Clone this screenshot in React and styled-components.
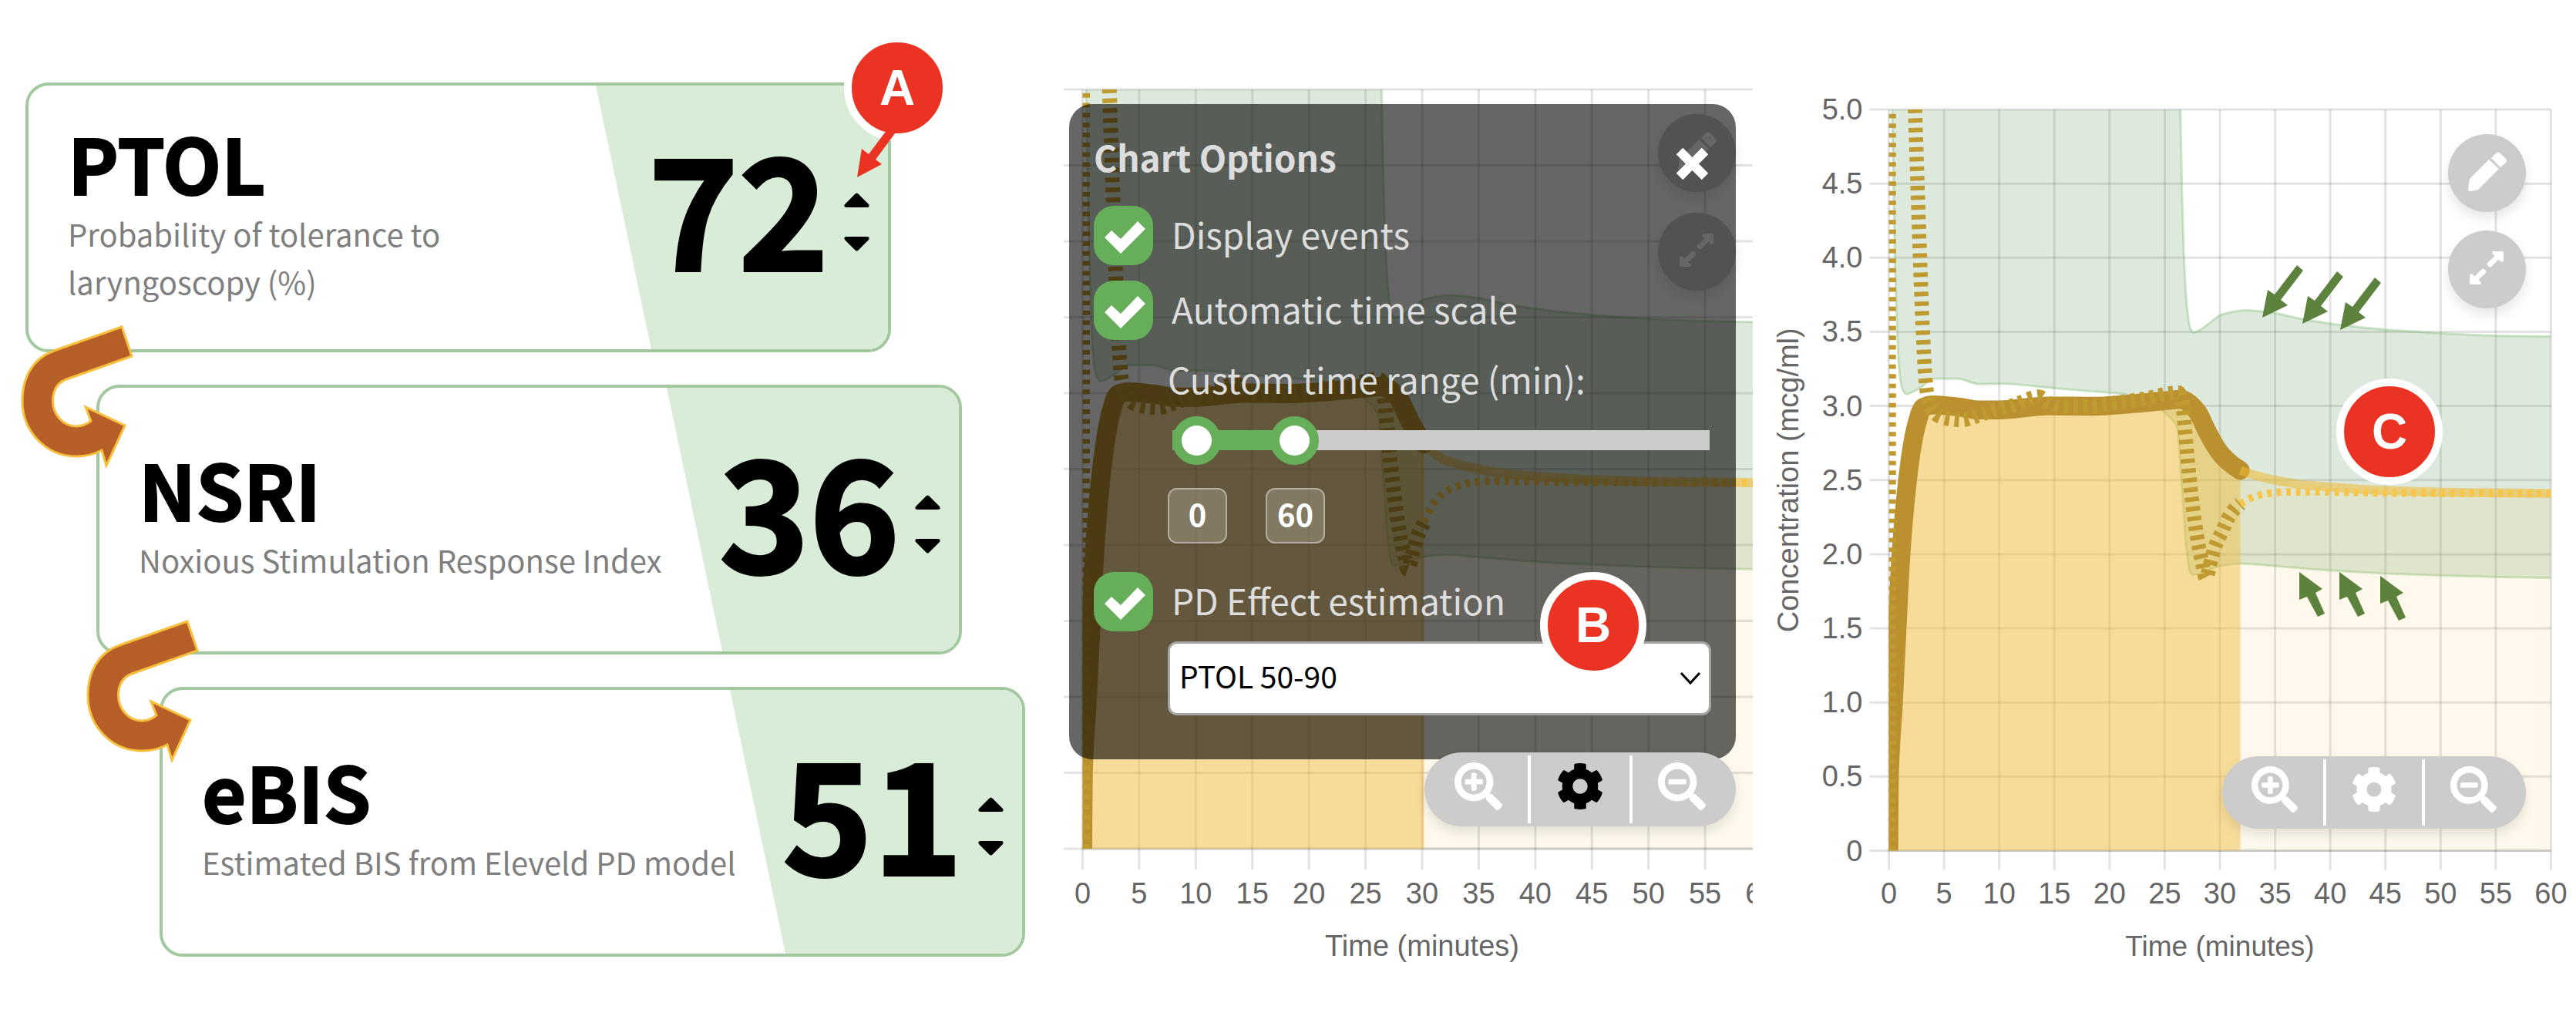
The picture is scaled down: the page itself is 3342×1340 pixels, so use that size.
import React, { useState } from 'react';
import styled, { createGlobalStyle, css } from 'styled-components';
import { FaCog, FaSearchMinus, FaSearchPlus } from 'react-icons/fa';

const sans = `"Noto Sans CJK SC", "Noto Sans", sans-serif`;
const arial = `"Liberation Sans", Arial, sans-serif`;

const GlobalStyle = createGlobalStyle`
  *, *::before, *::after { box-sizing: border-box; }
  body { margin: 0; background: #fff; font-family: ${sans}; }
  button, input, select { font: inherit; margin: 0; }
`;

const Page = styled.main`
  display: grid;
  grid-template-columns: minmax(0, 1380fr) minmax(0, 894fr) minmax(0, 1068fr);
  align-items: start;
  padding-top: 107px;
`;

/* ---------- score cards ---------- */

const Stack = styled.section`
  position: relative;
  display: flex;
  flex-direction: column;
  gap: 42px;
  padding-left: 33px;
`;

const Card = styled.article`
  position: relative;
  display: flex;
  align-items: stretch;
  width: 1123px;
  max-width: 100%;
  min-height: 350px;
  margin-left: ${(p) => p.$indent}px;
  border: 4px solid #a3c8a0;
  border-radius: 30px;
  overflow: hidden;
  background: #fff;

  &::before {
    content: '';
    position: absolute;
    inset: 0 0 0 auto;
    width: 379px;
    background: #d9ecd8;
    clip-path: polygon(0 0, 100% 0, 100% 100%, 72px 100%);
  }
`;

const CardText = styled.div`
  position: relative;
  display: flex;
  flex: 1;
  flex-direction: column;
  justify-content: center;
  min-width: 0;
  padding: 0 0 20px 51px;
`;

const CardTitle = styled.h2`
  margin: 0;
  font-size: 99px;
  line-height: 123px;
  font-weight: 700;
  color: #000;
  -webkit-text-stroke: 2px #000;
`;

const CardNote = styled.p`
  max-width: 715px;
  margin: 0;
  font-size: 40px;
  line-height: 62px;
  color: #7f7f7f;
`;

const CardValue = styled.div`
  position: relative;
  display: flex;
  align-items: center;
  gap: 20px;
  padding-right: 24px;
`;

const Score = styled.output`
  padding-bottom: 34px;
  font-size: 198px;
  line-height: 240px;
  font-weight: 700;
  color: #000;
  -webkit-text-stroke: 4px #000;
`;

const Stepper = styled.div`
  display: flex;
  flex-direction: column;
  gap: 38px;
  padding-top: 12px;
`;

const StepButton = styled.button`
  display: block;
  width: 33px;
  height: 19px;
  padding: 0;
  border: 0;
  background: none;
  color: #000;

  svg { display: block; transform: ${(p) => (p.$down ? 'scaleY(-1)' : 'none')}; }
`;

const Swoop = styled.svg`
  position: absolute;
  left: ${(p) => p.$left}px;
  top: ${(p) => p.$top}px;
  width: 150px;
  height: 190px;
`;

/* ---------- call-out badges ---------- */

const Badge = styled.span`
  position: absolute;
  left: ${(p) => p.$left}px;
  top: ${(p) => p.$top}px;
  display: flex;
  align-items: center;
  justify-content: center;
  width: 138px;
  height: 138px;
  border: 10px solid #fff;
  border-radius: 50%;
  background: #ea3323;
  color: #fff;
  font: 700 64px/64px ${arial};
`;

const Pointer = styled.svg`
  position: absolute;
  left: 1106px;
  top: 50px;
  width: 60px;
  height: 80px;
`;

/* ---------- charts ---------- */

const ChartFrame = styled.section`
  position: relative;
  min-width: 0;
`;

const Plot = styled.svg`
  display: block;
  width: 100%;
  height: auto;
  font-family: ${arial};
  font-size: 38px;
  fill: #666;
`;

const AxisTitle = styled.text`
  font-size: ${(p) => (p.$small ? 37 : 38)}px;
`;

const RoundButton = styled.button`
  position: absolute;
  right: ${(p) => p.$right}px;
  top: ${(p) => p.$top}px;
  width: 101px;
  height: 101px;
  padding: 0;
  border: 0;
  border-radius: 50%;
  background: #ccc;
  color: #fff;
  box-shadow: 0 8px 16px rgba(0, 0, 0, 0.1);

  svg { display: block; width: 100%; height: 100%; }
`;

const Toolbar = styled.div`
  position: absolute;
  right: ${(p) => p.$right}px;
  top: ${(p) => p.$top}px;
  display: flex;
  width: ${(p) => (p.$small ? 394 : 404)}px;
  height: ${(p) => (p.$small ? 94 : 96)}px;
  padding: 4px 6px;
  border-radius: 48px;
  background: #ccc;
  box-shadow: 0 8px 16px rgba(0, 0, 0, 0.1);
`;

const ToolButton = styled.button`
  display: flex;
  flex: 1;
  align-items: center;
  justify-content: center;
  padding: 0 0 8px;
  border: 0;
  background: none;
  color: ${(p) => (p.$active ? '#000' : '#fff')};
  font-size: ${(p) => (p.$small ? 60 : 62)}px;

  & + & { border-left: 4px solid #fff; }
`;

/* ---------- options dialog ---------- */

const Dialog = styled.form`
  position: absolute;
  left: 7px;
  right: 22px;
  top: 28px;
  display: flex;
  flex-direction: column;
  height: 850px;
  padding: 32px;
  border-radius: 30px;
  background: rgba(0, 0, 0, 0.6);
  color: #ddd;
  font-size: 46px;
`;

const DialogTitle = styled.h3`
  margin: 0 0 28px;
  font-size: 46px;
  line-height: 72px;
  font-weight: 700;
`;

const CloseButton = styled.button`
  position: absolute;
  right: 36px;
  top: 57px;
  width: 41px;
  height: 41px;
  padding: 0;
  border: 0;
  background: none;
  color: #fff;

  svg { display: block; }
`;

const CheckRow = styled.label`
  position: relative;
  display: flex;
  align-items: flex-start;
  gap: 24px;
  height: 77px;
  margin-bottom: ${(p) => p.$after}px;
  line-height: 72px;

  input {
    flex: none;
    width: 77px;
    height: 77px;
    appearance: none;
    border-radius: 26px;
    background: #67ae5b;
  }

  svg {
    position: absolute;
    left: 0;
    top: 0;
    width: 77px;
    height: 77px;
    visibility: hidden;
    pointer-events: none;
  }

  input:checked + svg { visibility: visible; }
`;

const Indent = styled.div`
  display: flex;
  flex-direction: column;
  padding-left: 96px;
`;

const RangeTitle = styled.span`
  line-height: 64px;
`;

const Slider = styled.div`
  position: relative;
  height: 64px;
  margin: 16px 2px 30px 6px;
`;

const Track = styled.div`
  position: absolute;
  inset: 19px 0;
  background: #ccc;
`;

const TrackFill = styled.div`
  height: 100%;
  background: #67ae5b;
`;

const thumb = css`
  width: 63px;
  height: 63px;
  border: 12px solid #67ae5b;
  border-radius: 50%;
  background: #fff;
  pointer-events: auto;
  appearance: none;
`;

const Range = styled.input`
  position: absolute;
  inset: 0;
  width: 100%;
  height: 64px;
  appearance: none;
  background: none;
  pointer-events: none;

  &::-webkit-slider-thumb { ${thumb} }
  &::-moz-range-thumb { ${thumb} }
`;

const RangeValues = styled.div`
  display: flex;
  gap: 50px;
  margin-bottom: 37px;
`;

const RangeValue = styled.output`
  width: 77px;
  height: 72px;
  border: 2px solid rgba(255, 255, 255, 0.4);
  border-radius: 12px;
  background: rgba(255, 255, 255, 0.2);
  color: #fff;
  font-size: 40px;
  line-height: 62px;
  font-weight: 700;
  text-align: center;
`;

const SelectBox = styled.div`
  position: relative;

  select {
    width: 100%;
    height: 96px;
    padding: 0 48px 8px 12px;
    border: 3px solid #a5a5a5;
    border-radius: 12px;
    appearance: none;
    background: #fff;
    color: #000;
    font-size: 39px;
  }

  svg {
    position: absolute;
    right: 13px;
    top: 38px;
    pointer-events: none;
  }
`;

/* ---------- chart data: [minutes, mcg/ml] ---------- */

const BAND_LOW = [[0, 6], [0.3, 5], [0.55, 3.98], [0.72, 3.57], [0.92, 3.26], [1.2, 3.12], [1.55, 3.08], [2.8, 3.12], [4.04, 3.184], [6.2, 3.184], [8.2, 3.147], [10.3, 3.15], [13, 3.135], [15, 3.12], [18, 3.1], [21.3, 3.08], [23.5, 3.03], [25, 2.956], [26.15, 2.85], [26.45, 2.545], [26.7, 2.31], [26.93, 2.06], [27.3, 1.88], [27.5, 1.86], [28, 1.868], [30.2, 1.924], [32.1, 1.936], [34.95, 1.92], [40, 1.89], [45, 1.87], [50, 1.856], [55, 1.846], [60, 1.84]];
const BAND_HIGH = [[26.35, 5.3], [26.42, 5], [26.55, 4.5], [26.75, 4], [27, 3.68], [27.3, 3.53], [27.6, 3.495], [28, 3.505], [29, 3.556], [30.2, 3.618], [32.4, 3.645], [35, 3.626], [37.4, 3.587], [40, 3.556], [45, 3.515], [50, 3.49], [55, 3.474], [60, 3.468]];
const EFFECT = [[0, 0], [0.05, 0.5], [0.42, 1], [0.75, 1.5], [1.1, 2], [1.55, 2.4], [2.05, 2.7], [2.5, 2.87], [3.1, 2.99], [4, 3.007], [6.3, 2.993], [8.2, 2.973], [10, 2.973], [14.3, 3], [18.5, 2.998], [21.8, 3.013], [25, 3.035], [26.5, 3.045], [27.1, 3.025], [28, 2.956], [28.75, 2.843], [29.5, 2.74], [30.18, 2.668], [31, 2.61], [31.85, 2.565], [32.85, 2.54], [35, 2.5], [37.4, 2.47], [40, 2.453], [45, 2.43], [50, 2.418], [60, 2.41]];
const PLASMA = [[2.3, 5.2], [2.37, 5], [3.47, 3.08], [3.9, 2.98], [4.7, 2.925], [5.7, 2.91], [6.7, 2.905], [7.5, 2.92], [9.3, 2.966], [11.5, 3.01], [13, 3.055], [13.6, 3.063], [14.5, 3.018], [15.5, 2.997], [18, 2.998], [21, 3.026], [23, 3.047], [26.25, 3.09], [26.6, 3.02], [26.8, 2.87], [27.2, 2.545], [27.9, 2.13], [28.4, 1.94], [28.72, 1.84], [29.25, 1.97], [29.6, 2.06], [30.18, 2.15], [30.8, 2.25], [31.4, 2.31], [31.85, 2.34], [32.8, 2.378], [33.65, 2.4], [34.5, 2.411], [36.2, 2.42], [38.4, 2.42], [41.3, 2.417], [45, 2.413], [60, 2.409]];

function valueAt(points, t) {
  const i = points.findIndex((p) => p[0] >= t);
  if (i <= 0) return points[0][1];
  const [t0, v0] = points[i - 1];
  const [t1, v1] = points[i];
  return v0 + ((v1 - v0) * (t - t0)) / (t1 - t0);
}

const before = (points, t) => [...points.filter((p) => p[0] < t), [t, valueAt(points, t)]];
const after = (points, t) => [[t, valueAt(points, t)], ...points.filter((p) => p[0] > t)];

// Monotone cubic interpolation, so that curves never overshoot their samples.
function curve(points) {
  const n = points.length;
  const slope = [];
  for (let i = 0; i < n - 1; i += 1) {
    slope.push((points[i + 1][1] - points[i][1]) / (points[i + 1][0] - points[i][0]));
  }
  const tan = points.map((_, i) => {
    if (i === 0) return slope[0];
    if (i === n - 1) return slope[n - 2];
    const a = slope[i - 1];
    const b = slope[i];
    return a * b <= 0 ? 0 : (2 * a * b) / (a + b);
  });
  let d = '';
  for (let i = 0; i < n - 1; i += 1) {
    const [x0, y0] = points[i];
    const [x1, y1] = points[i + 1];
    const h = (x1 - x0) / 3;
    d += `C${x0 + h} ${y0 + tan[i] * h} ${x1 - h} ${y1 - tan[i + 1] * h} ${x1} ${y1}`;
  }
  return { start: `${points[0][0]} ${points[0][1]}`, d };
}

function Chart({ id, label, view, x0, x60, y5, y0, tick, now, scale, small, children }) {
  const x = (t) => x0 + ((x60 - x0) * t) / 60;
  const y = (v) => y0 - ((y0 - y5) * v) / 5;
  const shape = (points) => curve(points.map(([t, v]) => [x(t), y(v)]));
  const line = (points) => {
    const c = shape(points);
    return `M${c.start}${c.d}`;
  };
  const area = (points) =>
    `${line(points)}L${x(points[points.length - 1][0])} ${y0}L${x(points[0][0])} ${y0}Z`;
  const lower = shape(BAND_LOW);
  const upper = shape([...BAND_HIGH].reverse());
  const dash = `${6 * scale} ${6.82 * scale}`;
  const minutes = Array.from({ length: 13 }, (_, i) => i * 5);
  const levels = Array.from({ length: 11 }, (_, i) => i / 2);

  return (
    <Plot viewBox={view} role="img" aria-label={label}>
      <defs>
        <clipPath id={id}>
          <rect x={x0} y={y5} width={x60 - x0} height={y0 - y5} />
        </clipPath>
      </defs>
      <g stroke="#000" strokeOpacity="0.11" strokeWidth="3">
        {minutes.map((m) => <line key={m} x1={x(m)} x2={x(m)} y1={y5} y2={y0 + tick} />)}
        {levels.map((v) => <line key={v} x1={x0 - 25} x2={x60} y1={y(v)} y2={y(v)} />)}
        <line x1={x0} x2={x60} y1={y0} y2={y0} />
      </g>
      <g clipPath={`url(#${id})`} fill="none">
        <path
          d={`M${lower.start}${lower.d}L${upper.start}${upper.d}Z`}
          fill="rgb(85,145,80)"
          fillOpacity="0.2"
        />
        <g stroke="#67ae5b" strokeOpacity="0.3" strokeWidth="3">
          <path d={line(BAND_LOW)} />
          <path d={line(BAND_HIGH)} />
        </g>
        <path d={area(before(EFFECT, now))} fill="rgb(239,185,51)" fillOpacity="0.5" />
        <path d={area(after(EFFECT, now))} fill="rgb(245,195,65)" fillOpacity="0.1" />
        <path
          d={line(before(EFFECT, now))}
          stroke="#bb912f"
          strokeWidth={25 * scale}
          strokeLinejoin="round"
          strokeLinecap="round"
        />
        <path d={line(after(EFFECT, now))} stroke="#efb933" strokeOpacity="0.55" strokeWidth={12 * scale} />
        <path d={`M${x0} ${y0}V${y5}`} stroke="#be9a30" strokeWidth={19 * scale} strokeDasharray={dash} />
        <path
          d={line(before(PLASMA, now))}
          stroke="#be9a30"
          strokeWidth={19 * scale}
          strokeDasharray={dash}
          strokeLinejoin="round"
        />
        <path d={line(after(PLASMA, now))} stroke="#f7c648" strokeWidth={10 * scale} strokeDasharray={dash} />
      </g>
      <g textAnchor="middle">
        {minutes.map((m) => <text key={m} x={x(m)} y="1172">{m}</text>)}
        <AxisTitle $small={small} x={x(30)} y="1240">Time (minutes)</AxisTitle>
      </g>
      {small && (
        <g textAnchor="end">
          {levels.map((v) => (
            <text key={v} x={x0 - 34} y={y(v) + 13}>{v === 0 ? '0' : v.toFixed(1)}</text>
          ))}
          <text textAnchor="middle" transform={`translate(${x0 - 118} ${(y0 + y5) / 2}) rotate(-90)`}>
            Concentration (mcg/ml)
          </text>
        </g>
      )}
      <g fill="#5d823e">{children}</g>
    </Plot>
  );
}

const EXPAND_HALF = 'M59 27H70Q72 27 72 29V39Q71 42 68 40L65.5 37.5L56 47Q54.5 48 53 47L51 45Q50 43.5 51 42L60.5 33L57.5 30Q56.5 27 59 27Z';

function ChartButtons({ right, tops }) {
  return (
    <>
      <RoundButton $right={right} $top={tops[0]} type="button" aria-label="Edit">
        <svg viewBox="0 0 101 101" fill="currentColor">
          <path d="M56 31L62 25Q65 22 68 25L75 32Q77 34 75 37L68 43Z" />
          <path d="M53 33L66 45L40 71Q38 73 36 73L28 74Q26 74 26 72L27 63Q27 60 29 57Z" />
        </svg>
      </RoundButton>
      <RoundButton $right={right} $top={tops[1]} type="button" aria-label="Full screen">
        <svg viewBox="0 0 101 101" fill="currentColor">
          <path d={EXPAND_HALF} />
          <path transform="rotate(180 50 48.5)" d={EXPAND_HALF} />
        </svg>
      </RoundButton>
    </>
  );
}

function ZoomBar({ right, top, small, active }) {
  return (
    <Toolbar $right={right} $top={top} $small={small} role="toolbar" aria-label="Chart tools">
      <ToolButton $small={small} type="button" aria-label="Zoom in"><FaSearchPlus /></ToolButton>
      <ToolButton $small={small} $active={active} type="button" aria-label="Chart options"><FaCog /></ToolButton>
      <ToolButton $small={small} type="button" aria-label="Zoom out"><FaSearchMinus /></ToolButton>
    </Toolbar>
  );
}

function CheckOption({ children, after: gap }) {
  return (
    <CheckRow $after={gap}>
      <input type="checkbox" defaultChecked />
      <svg viewBox="0 0 77 77" fill="#fff" aria-hidden="true">
        <path d="M14 41L23 32L35 43L57 20L67 30L35 62Z" />
      </svg>
      {children}
    </CheckRow>
  );
}

function OptionsDialog() {
  const [from, setFrom] = useState(0);
  const [to, setTo] = useState(60);
  const max = 300;
  return (
    <Dialog aria-label="Chart Options">
      <DialogTitle>Chart Options</DialogTitle>
      <CloseButton type="button" aria-label="Close">
        <svg viewBox="0 0 41 41" stroke="currentColor" strokeWidth="12" aria-hidden="true">
          <path d="M4 4L37 37M37 4L4 37" />
        </svg>
      </CloseButton>
      <CheckOption after={20}>Display events</CheckOption>
      <CheckOption after={18}>Automatic time scale</CheckOption>
      <Indent>
        <RangeTitle>Custom time range (min):</RangeTitle>
        <Slider>
          <Track><TrackFill style={{ width: `${(to / max) * 100}%` }} /></Track>
          <Range type="range" min="0" max={max} value={from} aria-label="Range start" onChange={(e) => setFrom(+e.target.value)} />
          <Range type="range" min="0" max={max} value={to} aria-label="Range end" onChange={(e) => setTo(+e.target.value)} />
        </Slider>
        <RangeValues>
          <RangeValue>{from}</RangeValue>
          <RangeValue>{to}</RangeValue>
        </RangeValues>
      </Indent>
      <CheckOption after={13}>PD Effect estimation</CheckOption>
      <Indent>
        <SelectBox>
          <select aria-label="PD effect" defaultValue="ptol">
            <option value="ptol">PTOL 50-90</option>
          </select>
          <svg width="28" height="20" viewBox="0 0 28 20" fill="none" stroke="#000" strokeWidth="3" aria-hidden="true">
            <path d="M2 3L14 16L26 3" />
          </svg>
        </SelectBox>
      </Indent>
    </Dialog>
  );
}

function ScoreCard({ title, note, value, indent }) {
  return (
    <Card $indent={indent}>
      <CardText>
        <CardTitle>{title}</CardTitle>
        <CardNote>{note}</CardNote>
      </CardText>
      <CardValue>
        <Score>{value}</Score>
        <Stepper>
          <StepButton type="button" aria-label={`Raise ${title}`}><StepIcon /></StepButton>
          <StepButton type="button" aria-label={`Lower ${title}`} $down><StepIcon /></StepButton>
        </Stepper>
      </CardValue>
    </Card>
  );
}

const StepIcon = () => (
  <svg width="33" height="19" viewBox="0 0 33 19" fill="currentColor" aria-hidden="true">
    <path d="M14 2Q16.500 -1 19 2L32 15Q34 19 30 19H3Q-1 19 1 15Z" />
  </svg>
);

const SwoopArrow = ({ left, top }) => (
  <Swoop $left={left} $top={top} viewBox="0 0 150 190" aria-hidden="true">
    <path
      d="M133 4L146 42L61 72C48 77 43.500 88 43.500 100C43.500 118 57 133 74 133C82 133 88 130 93 126L86 108L137 132L113 184L107 164C98 169 87 172 74 172C35 172 4 140 4 100C4 70 17 45 45 35Z"
      fill="#b65f29"
      stroke="#f7bf3c"
      strokeWidth="3"
    />
  </Swoop>
);

const DOWN_MARKS = [[2935, 412], [2987, 420], [3036, 428]];
const UP_MARKS = [[2983, 742], [3035, 742], [3088, 747]];

export default function App() {
  return (
    <>
      <GlobalStyle />
      <Page>
        <Stack aria-label="Pharmacodynamic scores">
          <ScoreCard title="PTOL" note="Probability of tolerance to laryngoscopy (%)" value="72" indent={0} />
          <ScoreCard title="NSRI" note="Noxious Stimulation Response Index" value="36" indent={92} />
          <ScoreCard title="eBIS" note="Estimated BIS from Eleveld PD model" value="51" indent={174} />
          <SwoopArrow left={25} top={313} />
          <SwoopArrow left={110} top={695} />
          <Badge $left={1095} $top={-62}>A</Badge>
          <Pointer viewBox="0 0 60 80" fill="#ea3323" aria-hidden="true">
            <path d="M6 73L12 36L21 43L45 11L58 12L30 50L38 56Z" />
          </Pointer>
        </Stack>

        <ChartFrame aria-label="Chart with options">
          <Chart
            id="plot-left"
            label="Concentration over time"
            view="1380 107 894 1233"
            x0={1404.5}
            x60={2285.5}
            y5={116}
            y0={1101}
            tick={27}
            now={30.18}
            scale={1}
          />
          <ChartButtons right={22} tops={[41, 169]} />
          <OptionsDialog />
          <ZoomBar right={22} top={869} active />
          <Badge $left={618} $top={635}>B</Badge>
        </ChartFrame>

        <ChartFrame aria-label="Chart">
          <Chart
            id="plot-right"
            label="Concentration over time with PTOL band"
            view="2274 107 1068 1233"
            x0={2450.5}
            x60={3309.5}
            y5={142}
            y0={1103.5}
            tick={25}
            now={31.85}
            scale={0.975}
            small
          >
            {DOWN_MARKS.map(([mx, my]) => (
              <path key={mx} d={`M${mx} ${my}l7 -36l9 6l29 -38l8 7l-29 38l9 7Z`} />
            ))}
            {UP_MARKS.map(([mx, my]) => (
              <path key={mx} d={`M${mx} ${my}v36l10 -4l14 26l9 -4l-12 -27l9 -5Z`} />
            ))}
          </Chart>
          <ChartButtons right={65} tops={[67, 192]} />
          <ZoomBar right={65} top={874} small />
          <Badge $left={757} $top={384}>C</Badge>
        </ChartFrame>
      </Page>
    </>
  );
}
